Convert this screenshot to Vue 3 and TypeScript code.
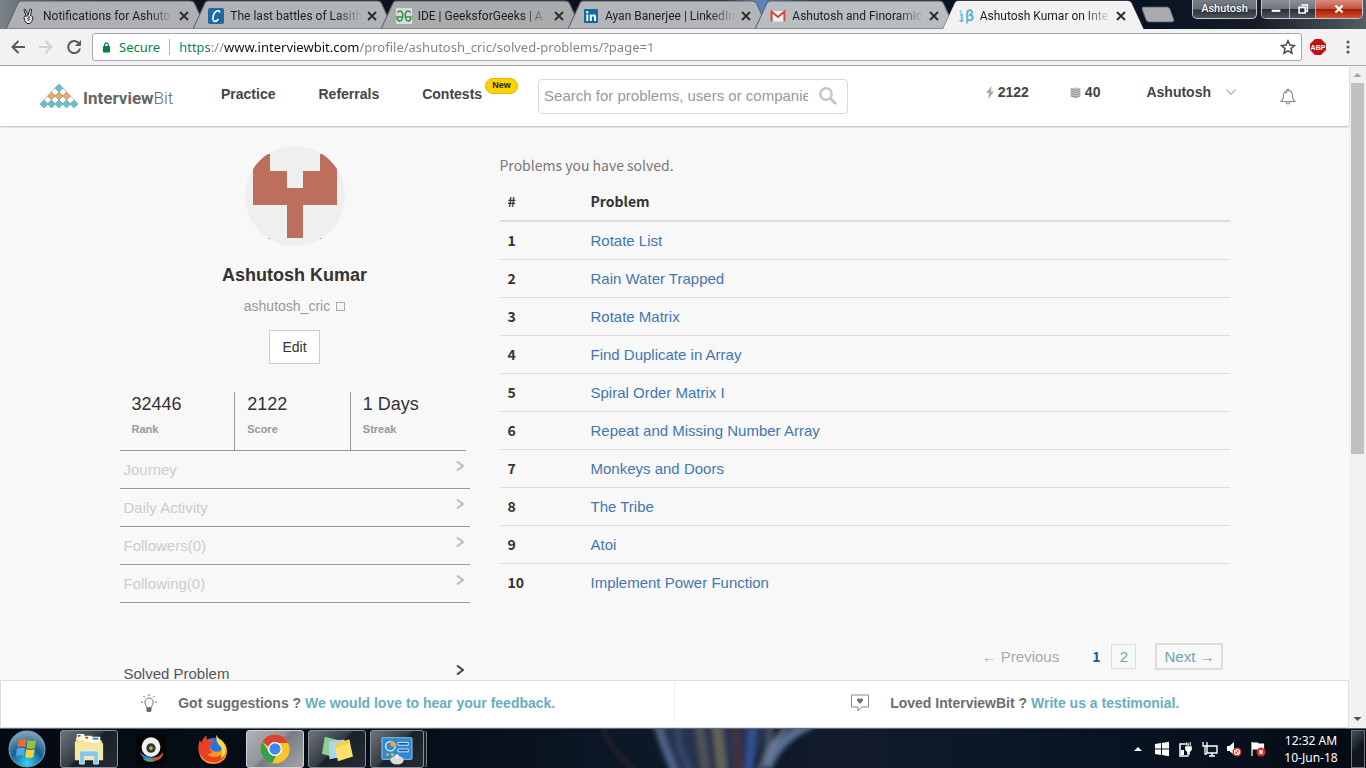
<script setup lang="ts">
import { ref } from 'vue'

interface Tab {
  id: string
  title: string
  tint: string
}

const tabs: Tab[] = [
  { id: 'hand', title: 'Notifications for Ashuto', tint: '#aeb0b4' },
  { id: 'cric', title: 'The last battles of Lasith', tint: '#b0b3b8' },
  { id: 'gfg', title: 'IDE | GeeksforGeeks | A', tint: '#a9abad' },
  { id: 'linkedin', title: 'Ayan Banerjee | LinkedIn', tint: '#b3b5b8' },
  { id: 'gmail', title: 'Ashutosh and Finoramic', tint: '#b9bcc1' },
  { id: 'ib', title: 'Ashutosh Kumar on Inte', tint: '#f2f2f2' },
]
const activeTab = ref('ib')

const url = ref('https://www.interviewbit.com/profile/ashutosh_cric/solved-problems/?page=1')
const query = ref('')

const stats = [
  { value: '32446', label: 'Rank' },
  { value: '2122', label: 'Score' },
  { value: '1 Days', label: 'Streak' },
]

const sections = ['Journey', 'Daily Activity', 'Followers(0)', 'Following(0)']

const problems = [
  'Rotate List',
  'Rain Water Trapped',
  'Rotate Matrix',
  'Find Duplicate in Array',
  'Spiral Order Matrix I',
  'Repeat and Missing Number Array',
  'Monkeys and Doors',
  'The Tribe',
  'Atoi',
  'Implement Power Function',
]

const diamonds = [
  { x: 19, y: 4, c: '#5fc4cc' },
  { x: 15, y: 8, c: '#fff' },
  { x: 23, y: 8, c: '#fff' },
  { x: 11.5, y: 12, c: '#f2a950' },
  { x: 19, y: 12, c: '#f2a950' },
  { x: 26.5, y: 12, c: '#f2a950' },
  { x: 7.5, y: 16, c: '#fff' },
  { x: 15, y: 16, c: '#fff' },
  { x: 23, y: 16, c: '#fff' },
  { x: 30.5, y: 16, c: '#fff' },
  { x: 4, y: 20, c: '#5fc4cc' },
  { x: 11.5, y: 20, c: '#5fc4cc' },
  { x: 19, y: 20, c: '#5fc4cc' },
  { x: 26.5, y: 20, c: '#5fc4cc' },
  { x: 34, y: 20, c: '#5fc4cc' },
]
</script>

<template>
  <div class="screen">
    <div class="titlebar">
      <div class="tabs" role="tablist">
        <div v-for="t in tabs" :key="t.id" class="tab" :class="{ active: t.id === activeTab }">
          <svg class="tab-shape" viewBox="0 0 201 29" preserveAspectRatio="none" aria-hidden="true">
            <path d="M0 29 L12 3 Q13 1 15 1 H184 Q187 1 188 3 L200 29 Z" :fill="t.tint" stroke="#5d626a" stroke-width="1" />
            <path v-if="t.id === activeTab" d="M0 29 L12 3 Q13 1 15 1 H184 Q187 1 188 3 L200 29 Z" fill="#f2f2f2" />
          </svg>
          <svg v-if="t.id === 'hand'" class="fav" viewBox="0 0 16 16">
            <path d="M5 8 L3 2 Q3 .8 4.2 1.2 L7 7 L9 1.2 Q10.3 .4 10.7 1.8 L9.5 7.5 Q12.5 8 12 10 Q11 14 9 15.5 H6 Q3 13 3 9.5 Q3.5 7.6 5 8 Z M5 8 Q8 7 8.5 9 Q8 10.5 6 10.5 M9 11 Q7 11.5 7 13" fill="#e6e6e6" stroke="#222" stroke-width="1" />
          </svg>
          <svg v-else-if="t.id === 'cric'" class="fav" viewBox="0 0 16 16">
            <rect width="16" height="16" rx="2" fill="#1f6aa5" />
            <path d="M11.8 4.6 Q11.6 2.2 9.4 2.8 Q5.8 4.2 5 9.4 Q4.6 13.4 7 13.4 Q9 13.2 10.4 11" fill="none" stroke="#fff" stroke-width="1.6" />
          </svg>
          <svg v-else-if="t.id === 'gfg'" class="fav" viewBox="0 0 16 16">
            <rect width="16" height="16" fill="#e8eee8" opacity=".75" />
            <path d="M1.5 4.5 Q3 2.5 5 3.2 Q7 4.5 6.8 8 Q6.5 13 3.5 13 Q1 12.6 1 9 H7 M14.5 4.5 Q13 2.5 11 3.2 Q9 4.5 9.2 8 Q9.5 13 12.5 13 Q15 12.6 15 9 H9" fill="none" stroke="#2f8d46" stroke-width="1.4" />
          </svg>
          <svg v-else-if="t.id === 'linkedin'" class="fav" viewBox="0 0 16 16">
            <rect x="1" y="1" width="14" height="14" rx="1" fill="#0a6ca3" />
            <path d="M3.3 6.5h2V13h-2zM3.2 3.3h2.2v2H3.2zM6.8 6.5h1.9v1q2-2 3.7-.5.7.8.7 2V13h-2V9.5q-.2-1.5-1.3-1.3-1 .2-1 1.5V13h-2z" fill="#fff" />
          </svg>
          <svg v-else-if="t.id === 'gmail'" class="fav" viewBox="0 0 16 16">
            <path d="M1 3h14v10.5H1z" fill="#f1f1f1" />
            <path d="M1.6 13.5V3.6L8 9l6.4-5.4v9.9" fill="none" stroke="#d5453b" stroke-width="2" />
          </svg>
          <svg v-else class="fav" viewBox="0 0 16 16">
            <path d="M2 6.5h1.8V13M1.5 13h4M2.8 2.5v2" fill="none" stroke="#6cc4dc" stroke-width="2" />
            <path d="M9.2 15.5V5 Q9.5 2.2 12 2.3 Q14.4 2.6 14 5 Q13.6 6.8 11 6.9 Q15 7.2 14.8 10 Q14 13 9.5 11.8" fill="none" stroke="#5bb9d3" stroke-width="2" />
          </svg>
          <button class="tab-title" role="tab" :aria-selected="t.id === activeTab" @click="activeTab = t.id">{{ t.title }}</button>
          <button class="tab-close" aria-label="Close tab">
            <svg viewBox="0 0 10 10"><path d="M1 1l8 8M9 1l-8 8" stroke="#2a2a2a" stroke-width="1.8" /></svg>
          </button>
        </div>
      </div>
      <button class="new-tab" aria-label="New tab">
        <svg viewBox="0 0 34 17"><path d="M2 1h24q2 0 3 2l4 11q0 2-2 2H8q-2 0-3-2L1 3q0-2 1-2z" fill="#aaabae" stroke="#55585e" stroke-width=".8" /></svg>
      </button>
      <div class="window-buttons">
        <button class="user-button">Ashutosh</button>
        <div class="win-group">
          <button class="win min" aria-label="Minimize"><svg viewBox="0 0 16 16"><rect x="3" y="8.500" width="10" height="3" fill="#fff" stroke="#444" stroke-width=".5" /></svg></button>
          <button class="win max" aria-label="Restore"><svg viewBox="0 0 16 16"><path d="M6 3.500h7v7h-2M3.500 6h7v6.500h-7z" fill="none" stroke="#fff" stroke-width="1.800" /></svg></button>
          <button class="win close" aria-label="Close"><svg viewBox="0 0 16 16"><path d="M4 4l8 8M12 4l-8 8" stroke="#fff" stroke-width="2.6" /></svg></button>
        </div>
      </div>
    </div>

    <div class="toolbar">
      <button class="tool" aria-label="Back"><svg viewBox="0 0 16 16"><path d="M15 8H2.500M8.500 2L2.500 8l6 6" fill="none" stroke="#5a5a5a" stroke-width="2" /></svg></button>
      <button class="tool" aria-label="Forward"><svg viewBox="0 0 16 16"><path d="M1 8h12.500M7.500 2l6 6-6 6" fill="none" stroke="#d2d2d2" stroke-width="2" /></svg></button>
      <button class="tool" aria-label="Reload"><svg viewBox="0 0 16 16"><path d="M13.200 4.800A6 6 0 1 0 14 9.500" fill="none" stroke="#5a5a5a" stroke-width="2" /><path d="M15 1v6H9z" fill="#5a5a5a" /></svg></button>
      <div class="omnibox">
        <svg class="lock" viewBox="0 0 10 12"><rect x="1" y="5" width="8" height="7" rx="1" fill="#0b8043" /><path d="M3 5.500V3.500a2 2 0 0 1 4 0v2" fill="none" stroke="#0b8043" stroke-width="1.400" /></svg>
        <span class="secure">Secure</span>
        <span class="bar"></span>
        <input v-model="url" class="address" type="text" aria-label="Address" spellcheck="false" />
        <button class="star" aria-label="Bookmark"><svg viewBox="0 0 16 16"><path d="M8 1.800l1.900 4.300 4.600.4-3.500 3.100 1 4.600L8 11.800l-4 2.400 1-4.600L1.500 6.500l4.600-.4z" fill="none" stroke="#4a4a4a" stroke-width="1.500" /></svg></button>
      </div>
      <button class="abp" aria-label="Adblock Plus">
        <svg viewBox="0 0 16 16"><path d="M5 0h6l5 5v6l-5 5H5l-5-5V5z" fill="#c70d0d" /><text x="8" y="10.600" text-anchor="middle" class="abp-text">ABP</text></svg>
      </button>
      <button class="menu" aria-label="Menu"><svg viewBox="0 0 4 14"><circle cx="2" cy="2" r="1.600" /><circle cx="2" cy="7" r="1.600" /><circle cx="2" cy="12" r="1.600" /></svg></button>
    </div>

    <div class="viewport">
      <div class="page">
        <header class="site-header">
          <a href="#" class="logo">
            <svg class="logo-mark" viewBox="0 0 38 24"><path v-for="(d, i) in diamonds" :key="i" :d="`M${d.x} ${d.y - 4}l4 4l-4 4l-4-4z`" :fill="d.c" stroke="#8b9a9b" stroke-width=".7" /></svg>
            <span class="logo-text"><b>Interview</b>Bit</span>
          </a>
          <nav class="nav">
            <a href="#">Practice</a>
            <a href="#">Referrals</a>
            <a href="#">Contests</a>
            <span class="new-badge">New</span>
          </nav>
          <form class="search" @submit.prevent>
            <input v-model="query" type="text" aria-label="Search" placeholder="Search for problems, users or companies" />
            <button aria-label="Search"><svg viewBox="0 0 18 18"><circle cx="7" cy="7" r="5.700" fill="none" stroke="#c6c6c6" stroke-width="2.400" /><path d="M11 11l6 6" stroke="#c6c6c6" stroke-width="3" /></svg></button>
          </form>
          <div class="account">
            <span class="metric score"><svg viewBox="0 0 8 13"><path d="M5.500 0L0 7h3L2.500 13 8 5.500H5z" fill="#a8a8a8" /></svg>2122</span>
            <span class="metric coins"><svg viewBox="0 0 12 13"><path d="M1 2.500q5-3 10 0v8.500q-5 3-10 0z" fill="#c4c4c4" /><path d="M.5 2.500q5.500 3 11 0M.5 5q5.500 3 11 0M.5 7.500q5.500 3 11 0M.5 10q5.500 3 11 0" fill="none" stroke="#8c8c8c" stroke-width="1" /></svg>40</span>
            <button class="user">Ashutosh<svg viewBox="0 0 10 6"><path d="M.5.500L5 5.300 9.500.500" fill="none" stroke="#b0b0b0" stroke-width="1.200" /></svg></button>
            <button class="bell" aria-label="Notifications"><svg viewBox="0 0 16 17"><path d="M1 13.500q2.500-1.800 2.500-6Q4 2.500 8 2.500t4.500 5q0 4.200 2.500 6zM6 14q.5 2 2 2t2-2M7 2.500q0-1.500 1-1.500t1 1.500M5.500 5.500q.8-1.300 2-1.500" fill="none" stroke="#8a8a8a" stroke-width="1.100" /></svg></button>
          </div>
        </header>

        <main class="content">
          <div class="container">
            <aside class="profile">
              <svg class="avatar" viewBox="0 0 100 100" role="img" aria-label="Avatar">
                <defs><clipPath id="round"><circle cx="50" cy="50" r="50" /></clipPath></defs>
                <g clip-path="url(#round)">
                  <rect width="100" height="100" fill="#efefef" />
                  <path d="M8 8h17v17h17v17h16V25h17V8h17v51H58v33H42V59H8zM8 92h17v8H8zM75 92h17v8H75z" fill="#bb6f5c" />
                  <rect x="23" y="93" width="54" height="7" fill="#efefef" />
                </g>
              </svg>
              <h1>Ashutosh Kumar</h1>
              <p class="handle"><span>ashutosh_cric</span><i class="missing"></i></p>
              <button class="edit">Edit</button>
              <dl class="stats">
                <div v-for="s in stats" :key="s.label"><dd>{{ s.value }}</dd><dt>{{ s.label }}</dt></div>
              </dl>
              <ul class="sections">
                <li v-for="s in sections" :key="s">
                  <a href="#"><span>{{ s }}</span><svg viewBox="0 0 8 12"><path d="M1 1.500l6 4.500-6 4.500" /></svg></a>
                </li>
                <li class="solved">
                  <a href="#"><span>Solved Problem</span><svg viewBox="0 0 8 12"><path d="M1 1.500l6 4.500-6 4.500" /></svg></a>
                </li>
              </ul>
            </aside>
            <section class="solutions">
              <p class="intro">Problems you have solved.</p>
              <table>
                <thead><tr><th class="num">#</th><th>Problem</th></tr></thead>
                <tbody>
                  <tr v-for="(p, i) in problems" :key="p"><th class="num" scope="row">{{ i + 1 }}</th><td><a href="#">{{ p }}</a></td></tr>
                </tbody>
              </table>
              <nav class="pager" aria-label="Pages">
                <span class="prev">← Previous</span>
                <span class="page-now">1</span>
                <a href="#" class="two">2</a>
                <a href="#" class="next">Next →</a>
              </nav>
            </section>
          </div>
        </main>

        <footer class="feedback">
          <p class="left">
            <svg class="bulb" viewBox="0 0 16 18"><path d="M5.500 13.500q0-1.500-1-3Q3 8 4.500 5.800 6 4 8 4t3.500 1.800Q13 8 11.500 10.500q-1 1.500-1 3z" fill="none" stroke="#777" /><path d="M5.500 14h5v2.500l-1 1.500h-3l-1-1.500z" fill="#666" /><path d="M8 0v2M2.500 2l1.500 1.500M13.500 2L12 3.500M0 8h2M14 8h2" stroke="#666" /></svg>
            <span>Got suggestions ? <a href="#">We would love to hear your feedback.</a></span>
          </p>
          <p class="right">
            <svg class="heart" viewBox="0 0 18 18"><path d="M.5 1h17v12h-7L7 17v-4H.500z" fill="none" stroke="#888" /><path d="M9 10L6 6.500q-.5-2 1.200-2.300 1.300 0 1.800 1.200.5-1.200 1.800-1.200Q12.500 4.500 12 6.500z" fill="#6d6d6d" /></svg>
            <span>Loved InterviewBit ? <a href="#">Write us a testimonial.</a></span>
          </p>
        </footer>
      </div>
      <div class="scrollbar" aria-hidden="true">
        <svg viewBox="0 0 17 17"><path d="M4.500 11h8l-4-4z" fill="#a3a3a3" /></svg>
        <div class="track"><div class="thumb"></div></div>
        <svg viewBox="0 0 17 17"><path d="M4.500 6h8l-4 4z" fill="#505050" /></svg>
      </div>
    </div>

    <div class="taskbar">
      <svg class="wallpaper" viewBox="0 0 260 40" preserveAspectRatio="none" aria-hidden="true">
        <defs><filter id="soft" x="-10%" y="-30%" width="120%" height="160%"><feGaussianBlur stdDeviation="2.500" /></filter></defs>
        <g filter="url(#soft)" fill="none" opacity=".85">
          <path d="M0 -4q10 26 34 46" stroke="#33232c" stroke-width="4" />
          <path d="M60 -6h110l-22 54H74z" fill="#2b3956" />
          <path d="M56 -6q8 28 20 54" stroke="#587099" stroke-width="8" />
          <path d="M78 -6q-4 24 14 54" stroke="#3d5076" stroke-width="6" />
          <path d="M98 -6l8 54" stroke="#5c5c5c" stroke-width="9" />
          <path d="M116 -6l6 54" stroke="#73705f" stroke-width="10" />
          <path d="M134 -6l4 54" stroke="#57353b" stroke-width="6" />
          <path d="M152 -6l-4 54" stroke="#3b5ba6" stroke-width="8" />
          <path d="M170 -6q0 24-14 54" stroke="#4e5c74" stroke-width="7" />
          <path d="M212 -6q-34 14-46 46" stroke="#6580a8" stroke-width="10" />
          <path d="M190 -6q-20 18-24 40" stroke="#8593a6" stroke-width="4" />
        </g>
      </svg>
      <button class="orb" aria-label="Start">
        <svg viewBox="0 0 36 36">
          <defs><radialGradient id="orb" cx=".5" cy=".9" r=".9"><stop offset="0" stop-color="#36d4f7" /><stop offset=".5" stop-color="#17608f" /><stop offset="1" stop-color="#88a9bd" /></radialGradient></defs>
          <circle cx="18" cy="18" r="17" fill="url(#orb)" stroke="#77a5bd" />
          <path d="M10 10q4-3 7.500-1l-1 7.500q-4-2-7.500 0z" fill="#f06a2c" />
          <path d="M18.700 9.500q4 2 8 0l-1.200 7.500q-4 2-8-.2z" fill="#8fc442" />
          <path d="M8.300 18q4-2.500 7.800-.5l-1 7.500q-3.500-2-7.500 0z" fill="#4fa9e4" />
          <path d="M17.300 18q4 2 8 0l-1.200 7.500q-4 2-7.800 0z" fill="#fbce3a" />
        </svg>
      </button>
      <button class="task open" aria-label="Explorer">
        <svg viewBox="0 0 34 34"><path d="M3 5h12l2 3h14v20H3z" fill="#e6c86c" /><path d="M4 1h8v7H4zM12 3h8v7h-8zM20 4h9v7h-9z" fill="#fffbea" /><path d="M5 2h3v2H5z" fill="#1c9a35" /><path d="M13 4h3v2h-3z" fill="#d63f2c" /><path d="M21 5h6v2h-6z" fill="#2f86c9" /><path d="M2 9h13l2 2h15v18H2z" fill="#f7e6a0" /><path d="M7 33V21q0-2 2-2h16q2 0 2 2v12h-5v-8H12v8z" fill="#86c7e6" stroke="#d6f0fb" /></svg>
      </button>
      <button class="task" aria-label="Webcam">
        <svg viewBox="0 0 34 34"><rect x="1" y="1" width="32" height="32" rx="3" fill="#050505" /><path d="M5 20q3 10 14 9t11-8q-5 6-13 5T5 20z" fill="#3c7ee8" /><path d="M17 27q9 0 13-7-1 10-11 10z" fill="#e24a3c" /><path d="M8 27q5 5 13 3l-4-2z" fill="#4bb84d" /><ellipse cx="17" cy="15" rx="10" ry="10.500" fill="#f1f1f1" /><circle cx="17" cy="16" r="5" fill="#363636" /><circle cx="17" cy="16" r="2" fill="#8fc84c" /></svg>
      </button>
      <button class="task" aria-label="Firefox">
        <svg viewBox="0 0 34 34"><circle cx="18" cy="17" r="12" fill="#2874df" /><path d="M20 1q1 4 5 6 7 5 7 13-1 12-14 13Q4 33 2 20 1 14 3 8l2 3Q6 6 10 3q-1 4 2 5h5q0 3-4 5 1 7 8 7 6 0 6-6 0-5-4-7-3-2-3-6z" fill="#ff9b24" /><path d="M2 20Q1 14 3 8l2 3Q6 6 10 3q-1 4 2 5h5q0 3-4 5 0 5 3 7-1 3-5 2 4 5 11 3 7-2 9-8-1 14-13 14T2 20z" fill="#ed3d25" /><path d="M21 2q1 4 5 6 6 6 4 14-2 4-5 5 3-8 0-13-6-5-4-12z" fill="#ffdc3d" /></svg>
      </button>
      <button class="task open front" aria-label="Chrome">
        <svg viewBox="0 0 34 34"><circle cx="17" cy="17" r="15.500" fill="#f8c52b" /><path d="M3.600 9.200A15.500 15.500 0 0 1 31 10.500H17a7 7 0 0 0-6.500 4z" fill="#dc4335" /><path d="M3.600 9.200L11 21q2 3.500 7 3.300l-4 7.900A15.500 15.500 0 0 1 3.600 9.200z" fill="#35a14b" /><circle cx="17" cy="17" r="7.500" fill="#fff" /><circle cx="17" cy="17" r="6" fill="#4285f4" /></svg>
      </button>
      <button class="task open" aria-label="Sticky Notes">
        <svg viewBox="0 0 34 34"><path d="M4 4l16 4-5 18L1 22z" fill="#8bd38b" /><path d="M8 9l17-2v18l-16 3z" fill="#a9d4f2" /><path d="M14 12l16-5 4 18-16 5z" fill="#fbe06b" /><path d="M14 12l16-5 1 4-16 5z" fill="#f5cf4a" /></svg>
      </button>
      <button class="task open stacked" aria-label="Control Panel">
        <svg viewBox="0 0 34 34"><rect x="1" y="5" width="32" height="23" rx="1" fill="#3089cf" stroke="#8fcdf2" /><circle cx="10" cy="14" r="5" fill="none" stroke="#d5efff" stroke-width="1.500" /><path d="M10 14V8a6 6 0 0 1 5 7z" fill="#f7a42a" /><path d="M18 10h11v3H18zM18 17h11v3H18z" fill="#17609f" stroke="#d5efff" /><circle cx="7" cy="23" r="1.500" fill="#f7a42a" /><circle cx="12" cy="23" r="1.500" fill="#f7c93a" /><ellipse cx="17" cy="29" rx="7" ry="4.500" fill="#dcdcdc" /><circle cx="17" cy="25" r="2.500" fill="#eee" /></svg>
      </button>
      <div class="tray">
        <svg class="up" viewBox="0 0 8 4"><path d="M0 4h8L4 0z" fill="#fff" /></svg>
        <svg viewBox="0 0 16 16"><path d="M1 3l6-1v5.500H1zM8 2l7-1.200v6.700H8zM1 8.500h6V14l-6-1zM8 8.500h7v6.700L8 14z" fill="#fff" /></svg>
        <svg viewBox="0 0 16 16"><path d="M2 3h8v12H2z" fill="none" stroke="#fff" stroke-width="1.500" /><path d="M7 5h7v4l-2 2v3H9v-3L7 9zM8 1h1.500v4H8zM11.500 1H13v4h-1.500z" fill="#fff" stroke="#111" stroke-width=".4" /><path d="M3 9h3v5H3z" fill="#fff" /></svg>
        <svg viewBox="0 0 16 16"><path d="M5 5h10v7H5zM7 15h6M10 12v3" fill="#101820" stroke="#fff" stroke-width="1.400" /><path d="M1 1v4h4V1M3 5v8h2" fill="none" stroke="#fff" stroke-width="1.300" /></svg>
        <svg viewBox="0 0 16 16"><path d="M1 5h2.500L8 1v13l-4.500-4H1z" fill="#fff" /><circle cx="11" cy="11" r="4.500" fill="#d92b20" /><circle cx="11" cy="11" r="2.500" fill="none" stroke="#fff" stroke-width="1.200" /><path d="M9.300 9.300l3.400 3.400" stroke="#fff" stroke-width="1.200" /></svg>
        <svg viewBox="0 0 16 16"><path d="M2 1v14M2.500 2h5l1 1h5v6h-5L7.500 8h-5z" fill="#fff" stroke="#fff" stroke-width="1.200" /><circle cx="11" cy="11" r="4.500" fill="#d92b20" /><path d="M9.300 9.300l3.400 3.400M12.700 9.300l-3.400 3.400" stroke="#fff" stroke-width="1.500" /></svg>
      </div>
      <div class="clock"><span>12:32 AM</span><span>10-Jun-18</span></div>
      <button class="show-desktop" aria-label="Show desktop"></button>
    </div>
  </div>
</template>

<style>
body {
  margin: 0;
  overflow: hidden;
}
</style>

<style scoped>
.screen {
  height: 100vh;
  display: flex;
  flex-direction: column;
  font-family: "Liberation Sans", Arial, sans-serif;
  color: #333;
}
.screen *, .screen *::before, .screen *::after { box-sizing: border-box; }
button { border: 0; padding: 0; background: none; font: inherit; color: inherit; cursor: pointer; }
a { text-decoration: none; color: inherit; }
svg { display: block; flex: none; }
p, h1, dl, dd, ul { margin: 0; padding: 0; }

/* Window title bar */
.titlebar {
  height: 29px;
  flex: none;
  display: flex;
  padding-left: 6px;
  background: linear-gradient(90deg, #7c8289 0, #6b7178 20px, #10151d 110px, #0a1220 40%, #0c1626 53%, #5a83bd 55%, #5a83bd 56%, #0b1424 60%, #0a1322 84%, #141c28 92%, #545c64 100%);
}
.tabs { flex: 0 1 1138px; min-width: 0; display: flex; }
.tab {
  flex: 1 1 0;
  min-width: 0;
  display: flex;
  align-items: center;
  position: relative;
  padding: 2px 18px 0 15px;
}
.tab + .tab { margin-left: -14px; }
.tab.active { z-index: 1; }
.tab-shape { position: absolute; inset: 0; width: 100%; height: 100%; }
.fav { position: relative; width: 16px; height: 16px; margin-right: 6px; }
.tab-title {
  position: relative;
  flex: 1;
  min-width: 0;
  overflow: hidden;
  white-space: nowrap;
  text-align: left;
  font: 12px/18px Roboto, "Noto Sans", sans-serif;
  color: #1d1d1d;
  mask-image: linear-gradient(90deg, #000 80%, transparent);
}
.tab-close { position: relative; flex: none; margin-left: 5px; width: 10px; }
.tab-close svg { width: 10px; height: 10px; }
.new-tab { width: 34px; margin: 0 0 0 -3px; }
.new-tab svg { width: 34px; height: 17px; }
.window-buttons { margin-left: auto; display: flex; gap: 4px; padding-right: 3px; height: 19px; }
.user-button {
  width: 65px;
  font: 500 11px/16px Roboto, "Noto Sans", sans-serif;
  color: #fff;
  text-shadow: 0 0 2px #000;
  background: linear-gradient(#777b82, #6b6f77 50%, #2f343c 55%, #4b525a);
  border: 1px solid #c4c7cb;
  border-top: 0;
  border-radius: 0 0 5px 5px;
  overflow: hidden;
}
.win-group { display: flex; border: 1px solid #c4c7cb; border-top: 0; border-radius: 0 0 5px 5px; overflow: hidden; }
.win { display: flex; align-items: center; justify-content: center; width: 28px; background: linear-gradient(#8c9097, #70757d 48%, #262c35 52%, #4f565f); border-right: 1px solid #aeb2b7; }
.win svg { width: 14px; height: 14px; }
.win.max { width: 26px; }
.win.close { width: 46px; border: 0; background: linear-gradient(#d78d80, #c45440 48%, #a01d0a 52%, #d2532c); }

/* Navigation bar */
.toolbar {
  height: 37px;
  flex: none;
  display: flex;
  align-items: center;
  padding: 0 16px 0 10px;
  background: #f2f2f2;
  border-bottom: 1px solid #aaa;
}
.tool { width: 16px; margin-right: 12px; }
.tool svg { width: 16px; height: 16px; }
.omnibox {
  flex: 1;
  min-width: 0;
  height: 28px;
  margin-left: -2px;
  display: flex;
  align-items: center;
  padding: 0 5px 0 9px;
  background: #fff;
  border: 1px solid #a9a9a9;
  border-radius: 3px;
  font: 13px/20px "Noto Sans", "Open Sans", sans-serif;
}
.lock { width: 9px; height: 12px; }
.secure { margin-left: 8px; color: #0b8043; }
.bar { width: 1px; height: 16px; margin: 0 9px; background: #b5b5b5; }
.address {
  flex: 1;
  min-width: 0;
  border: 0;
  outline: 0;
  padding: 0;
  font: inherit;
  color: transparent;
  caret-color: #000;
  background: linear-gradient(90deg, #0b8043 31px, #8a8a8a 31px, #8a8a8a 45px, #111 45px, #111 180px, #808080 180px);
  background-clip: text;
  -webkit-background-clip: text;
}
.star svg { width: 16px; height: 16px; }
.abp { width: 16px; margin-left: 8px; }
.abp svg { width: 16px; height: 16px; }
.abp-text { font: bold 7px "Liberation Sans", Arial, sans-serif; fill: #fff; }
.menu { width: 4px; margin-left: 20px; fill: #5a5a5a; }
.menu svg { width: 4px; height: 14px; }

/* Site */
.viewport { flex: 1; min-height: 0; display: flex; }
.page { flex: 1; min-width: 0; display: flex; flex-direction: column; background: #f8f8f8; }
.site-header {
  position: relative;
  flex: none;
  display: flex;
  align-items: center;
  height: 60px;
  padding: 0 53px 0 40px;
  background: #fff;
  box-shadow: 0 1px 2px rgba(0, 0, 0, .25);
  font-size: 14px;
  line-height: 20px;
  font-weight: bold;
  color: #444;
}
.logo { display: flex; align-items: center; gap: 5px; width: 136px; }
.logo-mark { width: 38px; height: 24px; }
.logo-text { font: 300 17px/24px Roboto, sans-serif; color: #666; padding-top: 4px; }
.logo-text b { font-weight: 700; }
.nav { display: flex; align-items: center; margin-left: 45px; padding-bottom: 4px; }
.nav a + a { margin-left: 43px; }
.new-badge {
  margin: -16px 0 0 3px;
  width: 33px;
  height: 16px;
  border: 1px solid #f0ae00;
  border-radius: 8px;
  background: #ffd200;
  font-size: 9px;
  line-height: 13px;
  text-align: center;
  color: #222;
}
.search { display: flex; align-items: center; width: 310px; height: 35px; margin-left: 20px; border: 1px solid #d9d9d9; border-radius: 4px; padding: 0 10px 0 5px; }
.search input { flex: 1; min-width: 0; border: 0; outline: 0; padding: 0; background: none; font: 15px/20px "Liberation Sans", Arial, sans-serif; color: #444; }
.search input::placeholder { color: #999; }
.search button { margin-left: 11px; }
.search svg { width: 18px; height: 18px; }
.account { margin-left: auto; display: flex; align-items: center; padding-bottom: 8px; }
.metric { display: flex; align-items: center; gap: 4px; }
.score svg { width: 8px; height: 13px; }
.coins { margin-left: 41px; }
.coins svg { width: 11px; height: 13px; }
.user { display: flex; align-items: center; gap: 15px; margin-left: 46px; }
.user svg { width: 10px; height: 6px; }
.bell { margin: 9px 0 0 44px; }
.bell svg { width: 16px; height: 17px; }

.content { flex: 1; min-height: 0; overflow: hidden; }
.container { display: flex; gap: 30px; max-width: 1140px; margin: 0 auto; padding: 20px 15px 0; }
.profile { flex: none; width: 350px; display: flex; flex-direction: column; align-items: center; }
.avatar { width: 100px; height: 100px; }
h1 { margin-top: 17px; font-size: 18px; line-height: 24px; font-weight: bold; color: #333; }
.handle { display: flex; align-items: center; gap: 6px; margin-top: 9px; font-size: 14px; line-height: 20px; color: #999; }
.missing { width: 9px; height: 9px; border: 1px solid #aaa; }
.edit { width: 51px; height: 34px; margin-top: 14px; background: #fff; border: 1px solid #ccc; font-size: 14px; line-height: 20px; color: #333; }
.stats { align-self: flex-start; display: flex; width: 346px; margin-top: 28px; border-bottom: 1px solid #999; }
.stats div { flex: 1; display: flex; flex-direction: column; height: 58px; padding-left: 12px; }
.stats div + div { border-left: 1px solid #999; }
.stats dd { font-size: 18px; line-height: 24px; color: #333; }
.stats dt { margin-top: 4px; font-size: 11px; line-height: 18px; font-weight: bold; color: #999; }
.sections { width: 100%; list-style: none; font-size: 15px; line-height: 37px; color: #ccc; }
.sections a { display: flex; justify-content: space-between; height: 38px; padding: 0 6px 0 4px; border-bottom: 1px solid #999; }
.sections svg { width: 8px; height: 12px; margin-top: 9px; fill: none; stroke: #bbb; stroke-width: 2px; }
.solved { margin-top: 52px; color: #555; }
.solved svg { stroke: #444; }

.solutions { flex: 1; min-width: 0; }
.intro, thead, .num, .page-now { font-family: "Noto Sans CJK SC", "Noto Sans", sans-serif; font-size: 14px; }
.intro { line-height: 20px; margin-top: 9px; color: #777; }
table { width: 100%; margin-top: 8px; border-collapse: collapse; font-size: 15px; line-height: 21px; }
th, td { height: 38px; padding: 0 8px; text-align: left; border-top: 1px solid #ddd; }
thead th { border-top: 0; border-bottom: 2px solid #ddd; }
.num { width: 83px; }
td a { color: #4277b0; }
.pager { display: flex; align-items: center; justify-content: flex-end; margin-top: 42px; padding-right: 7px; font-size: 15px; line-height: 23px; color: #6aa5b8; }
.prev { color: #aaa; margin-right: 33px; }
.page-now { font-weight: bold; color: #23608f; margin-right: 11px; }
.two { width: 25px; border: 1px solid #ddd; text-align: center; margin-right: 19px; }
.next { padding: 0 6px 0 7px; border: 2px solid #ddd; }

.feedback { flex: none; display: flex; height: 48px; padding: 2px 0 4px; background: #fff; border: 1px solid #ddd; font-size: 14px; line-height: 20px; font-weight: bold; color: #6d6d6d; }
.feedback p { width: 50%; display: flex; align-items: center; justify-content: center; gap: 21px; }
.feedback a { color: #68aec0; }
.feedback .left { padding-left: 22px; border-right: 1px solid #eee; }
.feedback .right { padding-left: 8px; }
.bulb { width: 16px; height: 18px; }
.heart { width: 18px; height: 18px; }

.scrollbar { flex: none; width: 17px; display: flex; flex-direction: column; background: #f1f1f1; }
.scrollbar svg { width: 17px; height: 17px; }
.track { flex: 1; padding: 0 2px; }
.thumb { height: 59%; background: #c1c1c1; }

/* Taskbar */
.taskbar {
  position: relative;
  flex: none;
  display: flex;
  align-items: center;
  height: 40px;
  padding: 0 1px 0 8px;
  border-top: 1px solid #606b77;
  background: linear-gradient(90deg, #060b12, #050d18 30%, #0c1826 45%, #101a2a 62%, #0a1728 75%, #050b14);
}
.wallpaper { position: absolute; left: 44%; top: 0; width: 19%; height: 100%; }
.orb { position: relative; width: 38px; }
.orb svg { width: 38px; height: 38px; }
.task { display: flex; align-items: center; justify-content: center; width: 58px; height: 38px; margin-left: 4px; border: 1px solid transparent; border-radius: 3px; }
.orb + .task { margin-left: 14px; }
.task svg { width: 32px; height: 32px; }
.task.open { border-color: #8a8f95; background: linear-gradient(135deg, #6f747a, #353b43 45%, #1a2027 50%, #262c34); }
.task.front { border-color: #d2d4d6; background: linear-gradient(135deg, #b0b2b6, #909398 45%, #777b81 50%, #a3a6aa); }
.task.stacked { box-shadow: 3px 0 0 -1px #1a2027, 4px 0 0 -1px #7a8087; width: 54px; }
.tray { margin-left: auto; display: flex; align-items: center; gap: 8px; }
.tray svg { width: 16px; height: 16px; }
.tray .up { width: 8px; height: 4px; margin-right: 4px; }
.clock { display: flex; flex-direction: column; align-items: center; width: 70px; margin-left: 10px; font: 12px/17px "Noto Sans", "Open Sans", sans-serif; color: #fff; white-space: nowrap; }
.show-desktop { width: 14px; height: 38px; margin-left: 5px; border: 1px solid #6d747c; background: linear-gradient(135deg, #4b5159, #12171e 50%); }
</style>
